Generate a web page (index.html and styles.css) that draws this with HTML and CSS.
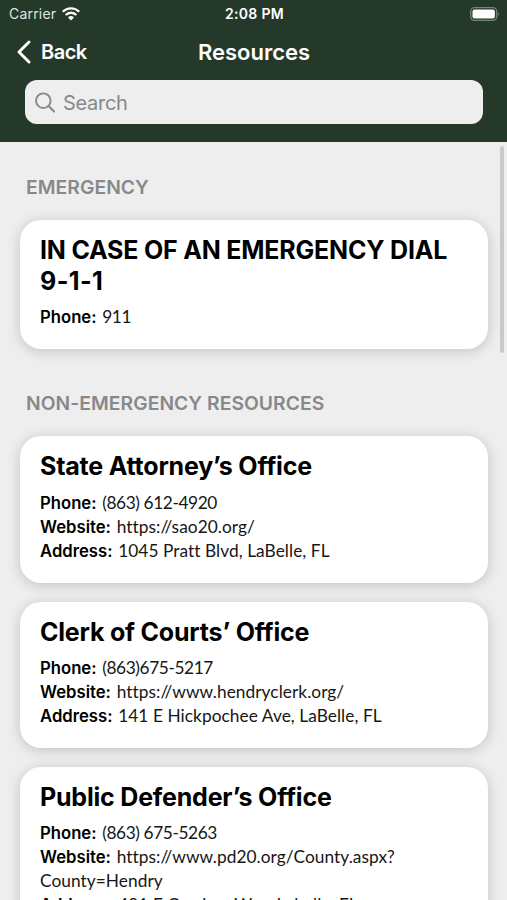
FILE: index.html
```html
<!DOCTYPE html>
<html lang="en">
<head>
  <meta charset="UTF-8" />
  <meta name="viewport" content="width=device-width, initial-scale=1.0" />
  <title>Resources</title>
  <link rel="stylesheet" href="styles.css">
</head>
<body>
  <!-- Header -->
  <header class="header">
    <div class="status-bar">
      <div class="carrier">
        <span>Carrier</span>
        <svg class="wifi" viewBox="0 0 18 14" width="18" height="14">
          <path d="M0.8 4.8 A11.4 11.4 0 0 1 17.2 4.8" fill="none" stroke="#fff" stroke-width="2.3" />
          <path d="M3.7 8 A7.4 7.4 0 0 1 14.3 8" fill="none" stroke="#fff" stroke-width="2.3" />
          <path d="M9 13.6 L6 10.5 A4.3 4.3 0 0 1 12 10.5 Z" fill="#fff" />
        </svg>
      </div>
      <span class="time">2:08 PM</span>
      <svg class="battery" viewBox="0 0 30 14" width="30" height="14">
        <rect x="0.7" y="0.7" width="26" height="12.6" rx="3.8" fill="none" stroke="#74857a" stroke-width="1.3" />
        <rect x="2.5" y="2.5" width="22.4" height="9" rx="2" fill="#fff" />
        <path d="M28.2 4.8 Q30 7 28.2 9.2 Z" fill="#74857a" />
      </svg>
    </div>

    <div class="nav-bar">
      <a class="back" href="#">
        <svg viewBox="0 0 16 24" width="16" height="24">
          <path d="M13 2 L3 12 L13 22" fill="none" stroke="#fff" stroke-width="2.9" stroke-linecap="round" stroke-linejoin="round" />
        </svg>
        <span>Back</span>
      </a>
      <h1>Resources</h1>
    </div>

    <div class="search">
      <svg viewBox="0 0 22 22" width="22" height="22">
        <circle cx="8.3" cy="8.7" r="7.3" fill="none" stroke="#88888b" stroke-width="1.9" />
        <path d="M13.6 14 L19 19.4" stroke="#88888b" stroke-width="2.1" stroke-linecap="round" />
      </svg>
      <input type="text" placeholder="Search" />
    </div>
  </header>

  <!-- Resource List -->
  <main class="list">
    <div class="scrollbar"></div>

    <h2 class="section-title">EMERGENCY</h2>
    <div class="card">
      <h3>IN CASE OF AN EMERGENCY DIAL <span class="code">9-1-1</span></h3>
      <p><strong>Phone:</strong> <span class="phone">911</span></p>
    </div>

    <h2 class="section-title">NON-EMERGENCY RESOURCES</h2>
    <div class="card">
      <h3>State Attorney’s Office</h3>
      <p><strong>Phone:</strong> <span class="phone">(863) 612-4920</span></p>
      <p><strong>Website:</strong> <span>https://sao20.org/</span></p>
      <p><strong>Address:</strong> <span>1045 Pratt Blvd, LaBelle, FL</span></p>
    </div>

    <div class="card">
      <h3>Clerk of Courts’ Office</h3>
      <p><strong>Phone:</strong> <span class="phone">(863)675-5217</span></p>
      <p><strong>Website:</strong> <span>https://www.hendryclerk.org/</span></p>
      <p><strong>Address:</strong> <span>141 E Hickpochee Ave, LaBelle, FL</span></p>
    </div>

    <div class="card">
      <h3>Public Defender’s Office</h3>
      <p><strong>Phone:</strong> <span class="phone">(863) 675-5263</span></p>
      <p><strong>Website:</strong> <span>https://www.pd20.org/County.aspx?<br>County=Hendry</span></p>
      <p><strong>Address:</strong> <span>481 E Cowboy Way, Labelle, FL</span></p>
    </div>
  </main>
</body>
</html>
```
FILE: styles.css
```css
* {
  box-sizing: border-box;
}

body {
  font-family: Inter, sans-serif;
  margin: 0;
  height: 100vh;
  overflow: hidden;
  display: flex;
  flex-direction: column;
  background: #eeeeee;
  color: #000;
}

h1, h2, h3, p {
  margin: 0;
}

.header {
  flex: none;
  height: 142px;
  background: #243929;
  color: white;
}

.status-bar {
  height: 27px;
  padding: 0 7px 0 9px;
  display: grid;
  grid-template-columns: 1fr auto 1fr;
  align-items: center;
  font-size: 14px;
}

.carrier {
  display: flex;
  align-items: center;
  gap: 6px;
  letter-spacing: 0.2px;
  color: #dfe4e0;
}

.time {
  font-weight: 600;
  letter-spacing: 0.3px;
}

.battery {
  justify-self: end;
}

.nav-bar {
  height: 49px;
  padding: 0 16px;
  display: grid;
  grid-template-columns: 1fr auto 1fr;
  align-items: center;
}

.back {
  display: flex;
  align-items: center;
  gap: 9px;
  color: white;
  font-size: 20px;
  font-weight: 600;
  letter-spacing: -0.5px;
  text-decoration: none;
}

.back span {
  padding-top: 1px;
}

h1 {
  padding-left: 1px;
  font-size: 22px;
  font-weight: 600;
}

.search {
  height: 44px;
  margin: 4px 24px 0 25px;
  padding: 1px 10px 0;
  display: flex;
  align-items: center;
  gap: 6px;
  background: #eeeeee;
  border-radius: 12px;
}

.search input {
  flex: 1;
  padding: 1px 0 0;
  border: none;
  outline: none;
  background: none;
  font-family: inherit;
  font-size: 20px;
  letter-spacing: -0.3px;
}

.search input::placeholder {
  color: #88888b;
}

.list {
  position: relative;
  flex: 1;
  padding: 10px 19px 0 20px;
  overflow: hidden;
}

.scrollbar {
  position: absolute;
  top: 4px;
  right: 3px;
  width: 4px;
  height: 207px;
  border-radius: 2px;
  background: #c9c9c9;
}

.section-title {
  padding: 22px 6px 20px;
  color: #88888a;
  font-size: 19.3px;
  font-weight: 600;
  letter-spacing: 0.05px;
  line-height: 26px;
}

.card {
  margin-bottom: 19px;
  padding: 15px 20px 20px;
  border-radius: 21px;
  background: white;
  box-shadow: 0 2px 13px rgba(0, 0, 0, 0.19);
}

.card h3 {
  margin-bottom: 8.4px;
  font-size: 25px;
  font-weight: 700;
  letter-spacing: -0.2px;
  line-height: 31px;
}

.card p {
  font-size: 16.7px;
  line-height: 24px;
}

.card p + p {
  margin-top: -0.1px;
}

.card strong {
  margin-right: 1px;
  font-weight: 600;
}

.card p span {
  color: #161616;
  font-family: Lato, sans-serif;
  font-size: 17.3px;
  font-variant-ligatures: none;
  letter-spacing: 0.06px;
  line-height: 1;
}

.card p span.phone {
  letter-spacing: -0.4px;
}

.code {
  letter-spacing: 0.4px;
}
```
